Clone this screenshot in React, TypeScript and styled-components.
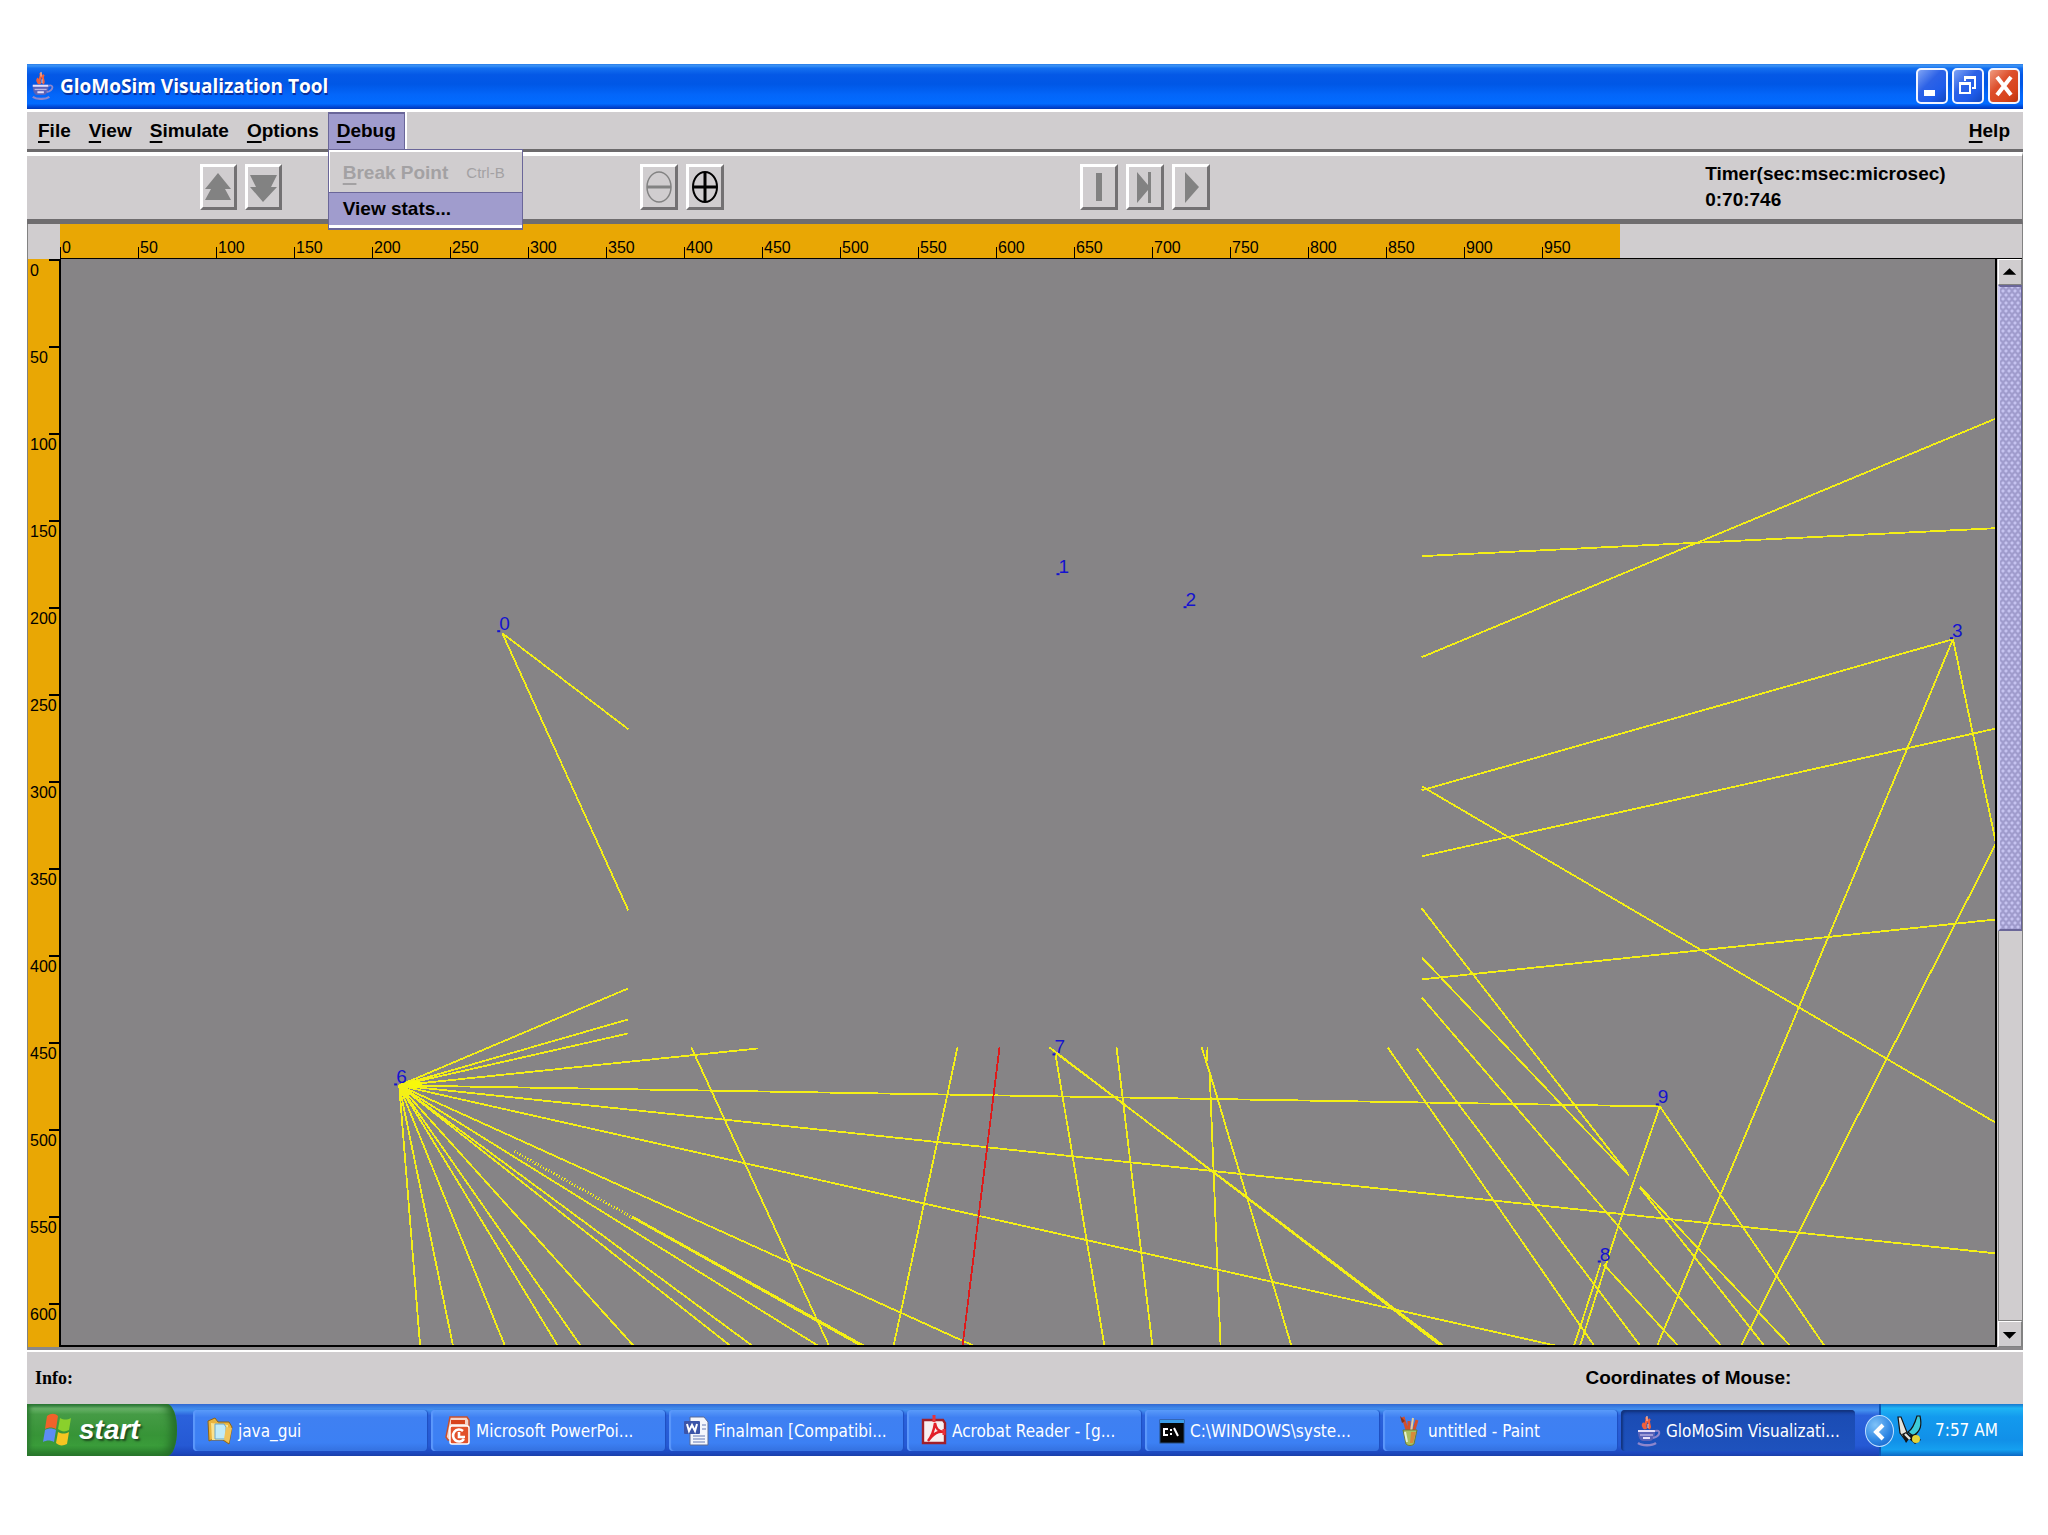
import React, { ReactNode } from "react";
import styled, { createGlobalStyle, css } from "styled-components";

const ui = `"Liberation Sans", Arial, sans-serif`;
const xp = `"DejaVu Sans Condensed", "DejaVu Sans", Tahoma, sans-serif`;

const face = "#d0cdcf";
const shade = "#828282";
const lilac = "#a09ccd";
const lilacDark = "#6a6699";
const amber = "#e9a704";
const fieldGray = "#868486";

const GlobalStyle = createGlobalStyle`
  *, *::before, *::after { box-sizing: border-box; }
  body { margin: 0; background: #fff; }
  button { font: inherit; color: inherit; margin: 0; padding: 0; border: 0; background: none; }
`;

const Desktop = styled.div`
  min-height: 100vh;
  padding: 64px 25px 79px 27px;
  display: flex;
  flex-direction: column;
  font-family: ${ui};
  color: #000;
`;

const AppWindow = styled.main`
  flex: 1;
  display: flex;
  flex-direction: column;
  background: ${face};
`;

/* ---- title bar ---- */

const TitleBar = styled.header`
  height: 45px;
  display: flex;
  align-items: center;
  gap: 6px;
  padding: 0 3px 2px;
  background: linear-gradient(#2a7de8 0, #3c94f6 4%, #1470f0 9%, #0458e6 24%, #0057e6 45%, #0366fa 68%, #026bff 88%, #0049d8 95%, #0036b4 100%);
`;

const Title = styled.h1`
  flex: 1;
  margin: 0;
  font: bold 19px/26px "Open Sans", "Noto Sans", sans-serif;
  color: #fff;
  text-shadow: 1px 2px 0 #0a2f9c;
`;

const Controls = styled.div`
  display: flex;
  gap: 4px;
`;

const Control = styled.button<{ $close?: boolean }>`
  width: 32px;
  height: 36px;
  border: 2px solid #f2f5ff;
  border-radius: 5px;
  background: ${(p) =>
    p.$close
      ? "linear-gradient(135deg, #ef9a80, #dd4f2c 40%, #d8441c 75%, #b9340f)"
      : "linear-gradient(135deg, #7fa4f5, #2d62e6 40%, #1f5cea 70%, #1247c0)"};
  svg { display: block; width: 28px; height: 32px; }
`;

/* ---- menu bar ---- */

const MenuBar = styled.nav`
  height: 43px;
  display: flex;
  padding-left: 2px;
  background: ${face};
  border-top: 3px solid #fff;
  border-bottom: 3px solid #6c6a6c;
  font: bold 19px/24px ${ui};
`;

const MenuSlot = styled.div<{ $end?: boolean }>`
  position: relative;
  ${(p) => p.$end && css`margin-left: auto; margin-right: 4px;`}
`;

const MenuButton = styled.button<{ $open?: boolean }>`
  height: 37px;
  padding: 0 9px;
  ${(p) =>
    p.$open &&
    css`
      background: ${lilac};
      box-shadow: inset 1px 2px 0 ${lilacDark}, inset -1px 0 0 ${lilacDark}, 2px 0 0 #fff;
    `}
`;

const Mnemonic = styled.span`
  text-decoration: underline;
  text-decoration-thickness: 2px;
  text-underline-offset: 4px;
`;

const Popup = styled.ul`
  position: absolute;
  z-index: 2;
  top: 37px;
  left: 0;
  width: 195px;
  margin: 0;
  padding: 2px 0 3px;
  list-style: none;
  background: ${face};
  border: 1px solid ${lilacDark};
  border-bottom-width: 2px;
  box-shadow: inset 1px 2px 0 #fff, inset 0 -3px 0 #fff;
`;

const PopupItem = styled.button<{ $active?: boolean }>`
  width: 100%;
  display: flex;
  align-items: center;
  gap: 18px;
  height: ${(p) => (p.$active ? "33px" : "40px")};
  padding: 2px 14px 0;
  color: #000;
  ${(p) => p.$active && css`padding-top: 0; background: ${lilac}; border-top: 1px solid ${lilacDark};`}
  &:disabled { color: #a3a1a3; }
`;

const Shortcut = styled.kbd`
  font: 15px/20px ${ui};
`;

/* ---- tool bar ---- */

const ToolBar = styled.section`
  height: 72px;
  display: grid;
  grid-template-columns: 440fr 440fr 626fr 317fr;
  align-items: center;
  padding: 0 0 2px 173px;
  border-top: 4px solid #fff;
  border-bottom: 5px solid #6f6d6f;
  border-right: 1px solid ${shade};
`;

const ToolGroup = styled.div`
  display: flex;
  gap: 8px;
`;

const ToolButton = styled.button<{ $wide?: boolean }>`
  width: ${(p) => (p.$wide ? "37px" : "38px")};
  height: 46px;
  background: ${face};
  border: 3px solid;
  border-color: #fff #737173 #737173 #fff;
  color: ${shade};
  svg { display: block; width: 100%; height: 100%; }
`;

const Timer = styled.output`
  font: bold 19px/26px ${ui};
  white-space: nowrap;
`;

const TimerLine = styled.span`
  display: block;
`;

/* ---- rulers and field ---- */

const View = styled.section`
  flex: 1;
  display: grid;
  grid-template: 35px minmax(0, 1fr) / 33px minmax(0, 1fr) 25px;
  border-left: 1px solid ${shade};
  border-right: 1px solid ${shade};
  border-bottom: 3px solid #8a888a;
`;

const TopRuler = styled.div`
  grid-column: 2 / 4;
  display: flex;
  margin-left: -1px;
  border-bottom: 1px solid #000;
  font: 16px/20px ${ui};
`;

const TopTick = styled.span`
  flex: 0 0 78px;
  display: flex;
  align-items: flex-end;
  background: ${amber};
  &::before { content: ""; width: 1px; height: 11px; background: #000; margin-right: 1px; }
`;

const Corner = styled.div`
  border-bottom: 1px solid ${face};
`;

const SideRuler = styled.div`
  background: ${amber};
  border-right: 2px solid #000;
  font: 16px/20px ${ui};
  height: 0;
  min-height: 100%;
  overflow: hidden;
`;

const SideTick = styled.div`
  height: 87px;
  padding: 2px 0 0 2px;
  background: linear-gradient(#000, #000) right top / 10px 2px no-repeat;
`;

const Field = styled.svg`
  display: block;
  width: 100%;
  height: 0;
  min-height: 100%;
  background: ${fieldGray};
  border-right: 2px solid #000;
  border-bottom: 2px solid #000;
`;

const ScrollBar = styled.div`
  display: flex;
  flex-direction: column;
  padding-left: 1px;
  background: ${face};
`;

const ArrowButton = styled.button`
  height: 26px;
  border: 1px solid #fff;
  border-right-color: ${shade};
  border-bottom-color: ${shade};
  svg { display: block; width: 100%; height: 100%; }
`;

const Thumb = styled.div`
  flex: 644;
  border: 2px solid ${lilacDark};
  border-left-color: #cfccf4;
  border-right-width: 1px;
  background-color: ${lilac};
  background-image: radial-gradient(circle, #c6c3f0 1px, transparent 2px), radial-gradient(circle, #c6c3f0 1px, transparent 2px);
  background-size: 6px 8px;
  background-position: 0 0, 3px 4px;
`;

const Track = styled.div`
  flex: 391;
  border-left: 1px solid ${shade};
  border-bottom: 1px solid ${shade};
`;

/* ---- status ---- */

const Status = styled.footer`
  height: 54px;
  display: grid;
  grid-template-columns: 1552fr 438fr;
  align-items: center;
  padding-left: 8px;
  border-top: 2px solid #fff;
  font: bold 19px/24px ${ui};
`;

const Info = styled.span`
  font: bold 18px/24px "Liberation Serif", "Times New Roman", serif;
`;

/* ---- task bar ---- */

const TaskBar = styled.nav`
  height: 52px;
  display: flex;
  font: 17px/24px ${xp};
  color: #fff;
  background: linear-gradient(#2f68d2 0, #3f88ea 8%, #4490ee 12%, #2b62dc 22%, #2559d4 80%, #1c47bd 95%, #1a3fa8 100%);
`;

const Start = styled.button`
  width: 150px;
  display: flex;
  align-items: center;
  gap: 6px;
  padding-left: 14px;
  border-radius: 0 10px 10px 0 / 0 26px 26px 0;
  background: linear-gradient(#2c7a44 0, #71b971 8%, #459b45 20%, #379437 60%, #3a9c3a 80%, #2a7d2e 100%);
  box-shadow: inset -6px 0 8px #256f28, inset 3px 0 4px #2f7d33;
  font: italic bold 28px/32px ${ui};
  color: #fff;
  text-shadow: 2px 2px 2px #1d4d1e;
  svg { width: 32px; height: 34px; flex: none; }
`;

const Tasks = styled.div`
  flex: 1;
  min-width: 0;
  display: flex;
  gap: 4px;
  padding: 6px 24px 5px 16px;
`;

const Task = styled.button<{ $active?: boolean }>`
  flex: 1 1 0;
  min-width: 0;
  display: flex;
  align-items: center;
  gap: 5px;
  padding-left: 14px;
  border-radius: 4px;
  white-space: nowrap;
  background: ${(p) =>
    p.$active
      ? "linear-gradient(#173f9c, #1b4cb4 15%, #1e52bd)"
      : "linear-gradient(#5a9bfa, #3f80f2 18%, #3c80f4 80%, #3471e0)"};
  box-shadow: ${(p) => (p.$active ? "inset 2px 2px 2px #12347f" : "inset 2px 0 1px #5c98fb, 1px 0 1px #1f4fc0")};
  svg { width: 26px; height: 32px; flex: none; }
`;

const Tray = styled.div`
  position: relative;
  width: 144px;
  display: flex;
  align-items: center;
  gap: 12px;
  padding-left: 16px;
  border-left: 2px solid #0c55b4;
  background: linear-gradient(#1678d0 0, #1fb4f4 8%, #139aee 25%, #1190e8 70%, #15a0f0 88%, #0c68c4 100%);
  svg { width: 26px; height: 32px; flex: none; }
`;

const Expand = styled.button`
  position: absolute;
  left: -16px;
  top: 11px;
  width: 29px;
  height: 32px;
  border-radius: 50%;
  border: 1px solid #bfe0ff;
  background: radial-gradient(circle at 35% 30%, #7fc2f8, #2a83e2 60%, #145cc0);
  svg { display: block; width: 27px; height: 30px; }
`;

/* ---- drawings ---- */

const JavaIcon = ({ size = 26 }: { size?: number }) => (
  <svg viewBox="0 0 26 32" width={size} height={(size * 32) / 26} aria-hidden="true">
    <path d="M11 2c3 4-3 6 0 12M15 4c-4 4 2 5-1 10M9 8c-3 3 1 4 0 6" stroke="#f0603c" strokeWidth="2.4" fill="none" />
    <path d="M12 1v5M13 9v4" stroke="#ffd0b8" strokeWidth="1" />
    <path d="M3 15h17v2c0 6-3 9-5 9H8c-3 0-5-4-5-9z" fill="#5a62b8" />
    <path d="M3 16h17M8 23h7" stroke="#e6e0fa" strokeWidth="2" />
    <path d="M5 20h13" stroke="#b9b4e4" strokeWidth="1.4" />
    <path d="M20 16c6-2 6 5-2 7" stroke="#8d86cc" strokeWidth="2" fill="none" />
    <path d="M3 28c4 3 14 3 18 0" stroke="#8d86cc" strokeWidth="2.4" fill="none" />
  </svg>
);

const FlagIcon = () => (
  <svg viewBox="0 0 32 34" aria-hidden="true">
    <path d="M6 3c4-3 8-3 11 0l-2 13c-4-2-7-2-11 0z" fill="#f0622a" />
    <path d="M19 5c4 2 7 2 11 0l-2 12c-4 2-7 2-11-1z" fill="#8ad02c" />
    <path d="M4 17c4-2 7-2 11 0l-2 12c-4-2-7-2-11 0z" fill="#5d8cf4" />
    <path d="M17 19c4 2 7 2 11 0l-2 12c-4 2-8 2-11-1z" fill="#f6c521" />
  </svg>
);

const FolderIcon = () => (
  <svg viewBox="0 0 26 32" aria-hidden="true">
    <path d="M1 6l7-3 3 4 11 0 3 5-3 17-6-4H4L2 26z" fill="#e9b43e" stroke="#8f6415" strokeWidth="1" />
    <path d="M4 8l17 2v15H5z" fill="#fbe28d" />
    <path d="M8 9h9l2 3v12H8z" fill="#bfeaf8" stroke="#6aa4c4" strokeWidth="1" />
    <path d="M19 12l6 1-3 15-5-4z" fill="#f0c358" />
  </svg>
);

const SlidesIcon = () => (
  <svg viewBox="0 0 26 32" aria-hidden="true">
    <path d="M5 2h17l2 3v22l-5-2H3L1 22z" fill="#f6d3c8" stroke="#c9502c" strokeWidth="1.5" />
    <path d="M6 5h14v4H6z" fill="#d8431c" />
    <rect x="5" y="11" width="19" height="18" rx="2" fill="#e2512b" stroke="#fff" strokeWidth="1.5" />
    <path d="M18 16a6 6 0 1 0 1 8M14 17v5h6" fill="none" stroke="#fff" strokeWidth="2.6" />
  </svg>
);

const DocumentIcon = () => (
  <svg viewBox="0 0 26 32" aria-hidden="true">
    <path d="M7 2h14l4 5v23H7z" fill="#f4f6fc" stroke="#5a6a94" strokeWidth="1" />
    <path d="M10 21h12M10 24h12M10 27h12M19 10h4M19 14h4" stroke="#93a3cc" strokeWidth="1.4" />
    <rect x="1" y="6" width="16" height="13" rx="1" fill="#3c55a8" />
    <path d="M4 9l2 7 3-6 3 6 2-7" fill="none" stroke="#fff" strokeWidth="2" />
  </svg>
);

const ReaderIcon = () => (
  <svg viewBox="0 0 26 32" aria-hidden="true">
    <path d="M2 5h20l2 3v20H2z" fill="#f8f0f0" stroke="#a0202a" strokeWidth="2.4" />
    <path d="M7 26c4-5 6-11 7-18 1 6 3 8 9 9-6-1-10 1-16 9z" fill="none" stroke="#e21f28" strokeWidth="2.4" />
    <path d="M13 0v7M23 14v6" stroke="#e8323a" strokeWidth="3" />
  </svg>
);

const ConsoleIcon = () => (
  <svg viewBox="0 0 26 32" aria-hidden="true">
    <rect x="1" y="5" width="24" height="23" fill="#050505" stroke="#274a78" strokeWidth="1" />
    <rect x="1" y="5" width="24" height="3" fill="#3b9de8" />
    <path d="M9 14H5v6h4M12 14v2M12 18v2M15 13l4 8" fill="none" stroke="#fff" strokeWidth="2" />
  </svg>
);

const BrushIcon = () => (
  <svg viewBox="0 0 26 32" aria-hidden="true">
    <path d="M6 2l5 16M12 6v12M20 5l-4 13" stroke="#d34f2c" strokeWidth="3" />
    <path d="M16 3l-2 14" stroke="#e5cf9e" strokeWidth="2" />
    <path d="M3 1l5 5-3 2z" fill="#8e3218" />
    <path d="M6 15h14l-3 14c-2 2-6 2-8 0z" fill="#a8bf62" stroke="#6b7a3a" strokeWidth="1" />
    <path d="M14 17h5l-3 11h-3z" fill="#d68a3a" />
    <path d="M8 17l2 10" stroke="#e8f2d0" strokeWidth="2" />
  </svg>
);

const NotifyIcon = () => (
  <svg viewBox="0 0 26 32" aria-hidden="true">
    <path d="M1 3h3l7 18-2 6-6-8z" fill="#e4e4dc" stroke="#141414" strokeWidth="1.2" />
    <path d="M20 2h3c2 9 1 15-7 20l-5-4c5-3 7-9 9-16z" fill="#3ccbd8" stroke="#141414" strokeWidth="1.2" />
    <path d="M5 20l4 9 3-4 6 5 6-4-5-6-6 1-4-3z" fill="#151515" />
    <path d="M8 20l5 5" stroke="#e4e4dc" strokeWidth="2.4" />
    <circle cx="19" cy="25" r="4" fill="#e2d43a" />
  </svg>
);

const tasks: { label: string; icon: ReactNode; active?: boolean }[] = [
  { label: "java_gui", icon: <FolderIcon /> },
  { label: "Microsoft PowerPoi...", icon: <SlidesIcon /> },
  { label: "Finalman [Compatibi...", icon: <DocumentIcon /> },
  { label: "Acrobat Reader - [g...", icon: <ReaderIcon /> },
  { label: "C:\\WINDOWS\\syste...", icon: <ConsoleIcon /> },
  { label: "untitled - Paint", icon: <BrushIcon /> },
  { label: "GloMoSim Visualizati...", icon: <JavaIcon />, active: true },
];

/* Radio links between nodes, in field coordinates: x1, y1, x2, y2. */
const links: number[][] = [
  [502, 633, 628, 729], [502, 633, 628, 910],
  [1421, 556, 1996, 528], [1421, 657, 1996, 418], [1421, 790, 1952, 639],
  [1421, 856, 1996, 728], [1421, 786, 1996, 1123], [1421, 979, 1996, 919],
  [1952, 639, 1995, 843], [1952, 639, 1656, 1346], [1995, 843, 1740, 1346],
  [1421, 908, 1627, 1173], [1421, 957, 1628, 1175], [1639, 1187, 1764, 1346],
  [1639, 1186, 1790, 1346], [1421, 997, 1721, 1346], [1416, 1048, 1640, 1346],
  [1387, 1047, 1594, 1346], [1659, 1106, 1824, 1346], [1659, 1106, 1617, 1227],
  [1617, 1227, 1579, 1346], [1600, 1263, 1573, 1346], [1603, 1264, 1678, 1346],
  [399, 1085, 628, 988], [399, 1085, 628, 1019], [399, 1085, 628, 1033],
  [399, 1085, 758, 1048], [399, 1085, 1659, 1106], [399, 1085, 1996, 1253],
  [399, 1085, 1559, 1346], [399, 1085, 975, 1346], [399, 1085, 420, 1346],
  [399, 1085, 453, 1346], [399, 1085, 505, 1346], [399, 1085, 558, 1346],
  [399, 1085, 581, 1346], [399, 1085, 634, 1346], [399, 1085, 731, 1346],
  [399, 1085, 753, 1346], [399, 1085, 819, 1346], [632, 1217, 862, 1346],
  [632, 1216, 865, 1346], [691, 1047, 829, 1346], [957, 1047, 893, 1346],
  [1049, 1047, 1441, 1346], [1056, 1053, 1444, 1346], [1055, 1054, 1104, 1346],
  [1116, 1047, 1152, 1346], [1201, 1047, 1210, 1075], [1210, 1075, 1291, 1346],
  [1207, 1047, 1206, 1061], [1209, 1071, 1220, 1346],
];

const nodes: [string, number, number][] = [
  ["0", 499, 630], ["1", 1058, 573], ["2", 1185, 606], ["3", 1951, 637],
  ["6", 396, 1083], ["7", 1054, 1053], ["8", 1599, 1260], ["9", 1657, 1103],
];

const menus = ["File", "View", "Simulate", "Options"];

const MenuLabel = ({ text }: { text: string }) => (
  <>
    <Mnemonic>{text[0]}</Mnemonic>
    {text.slice(1)}
  </>
);

export default function App() {
  return (
    <Desktop>
      <GlobalStyle />
      <AppWindow>
        <TitleBar>
          <JavaIcon size={24} />
          <Title>GloMoSim Visualization Tool</Title>
          <Controls>
            <Control aria-label="Minimize">
              <svg viewBox="0 0 28 32"><rect x="6" y="20" width="11" height="6" fill="#fff" /></svg>
            </Control>
            <Control aria-label="Restore">
              <svg viewBox="0 0 28 32" fill="none" stroke="#fff" strokeWidth="2">
                <path d="M11 11V7h10v11h-3" /><path d="M10 7.500h12" strokeWidth="3" />
                <rect x="6" y="13" width="10" height="10" /><path d="M5 13.500h12" strokeWidth="3" />
              </svg>
            </Control>
            <Control $close aria-label="Close">
              <svg viewBox="0 0 28 32"><path d="M7 7l14 18M21 7L7 25" stroke="#fff" strokeWidth="4" /></svg>
            </Control>
          </Controls>
        </TitleBar>

        <MenuBar>
          {menus.map((m) => (
            <MenuSlot key={m}>
              <MenuButton><MenuLabel text={m} /></MenuButton>
            </MenuSlot>
          ))}
          <MenuSlot>
            <MenuButton $open aria-expanded="true"><MenuLabel text="Debug" /></MenuButton>
            <Popup>
              <li>
                <PopupItem disabled>
                  <span><MenuLabel text="Break Point" /></span>
                  <Shortcut>Ctrl-B</Shortcut>
                </PopupItem>
              </li>
              <li><PopupItem $active>View stats...</PopupItem></li>
            </Popup>
          </MenuSlot>
          <MenuSlot $end>
            <MenuButton><MenuLabel text="Help" /></MenuButton>
          </MenuSlot>
        </MenuBar>

        <ToolBar>
          <ToolGroup>
            <ToolButton $wide disabled aria-label="Speed up">
              <svg viewBox="0 0 31 40"><path d="M15 6l13 16h-6l6 11H2l6-11H2z" fill="currentColor" /></svg>
            </ToolButton>
            <ToolButton $wide disabled aria-label="Slow down">
              <svg viewBox="0 0 31 40"><path d="M15 35L2 20h6L2 8h27l-6 12h6z" fill="currentColor" /></svg>
            </ToolButton>
          </ToolGroup>
          <ToolGroup>
            <ToolButton disabled aria-label="Zoom out">
              <svg viewBox="0 0 32 40" fill="none" stroke="currentColor">
                <ellipse cx="16" cy="20" rx="12" ry="15" strokeWidth="1.500" /><path d="M4 20h24" strokeWidth="3" />
              </svg>
            </ToolButton>
            <ToolButton aria-label="Zoom in">
              <svg viewBox="0 0 32 40" fill="none" stroke="#000">
                <ellipse cx="16" cy="20" rx="12" ry="15" strokeWidth="2" /><path d="M4 20h24M16 5v30" strokeWidth="3" />
              </svg>
            </ToolButton>
          </ToolGroup>
          <ToolGroup>
            <ToolButton disabled aria-label="Pause">
              <svg viewBox="0 0 32 40"><rect x="13" y="6" width="6" height="28" fill="currentColor" /></svg>
            </ToolButton>
            <ToolButton disabled aria-label="Step">
              <svg viewBox="0 0 32 40"><path d="M8 5l11 13V5h3v31h-3V23L8 36z" fill="currentColor" /></svg>
            </ToolButton>
            <ToolButton disabled aria-label="Play">
              <svg viewBox="0 0 32 40"><path d="M10 5l14 15-14 16z" fill="currentColor" /></svg>
            </ToolButton>
          </ToolGroup>
          <Timer>
            <TimerLine>Timer(sec:msec:microsec)</TimerLine>
            <TimerLine>0:70:746</TimerLine>
          </Timer>
        </ToolBar>

        <View>
          <Corner />
          <TopRuler>
            {Array.from({ length: 20 }, (_, i) => (
              <TopTick key={i}>{i * 50}</TopTick>
            ))}
          </TopRuler>
          <SideRuler>
            {Array.from({ length: 13 }, (_, i) => (
              <SideTick key={i}>{i * 50}</SideTick>
            ))}
          </SideRuler>
          <Field viewBox="61 259 1933 1086" preserveAspectRatio="xMinYMin slice" role="img" aria-label="Node field">
            <g stroke="#f4f016" strokeWidth="1.8" shapeRendering="crispEdges">
              {links.map(([x1, y1, x2, y2], i) => (
                <line key={i} x1={x1} y1={y1} x2={x2} y2={y2} />
              ))}
              <line x1="514" y1="1151" x2="632" y2="1217" strokeWidth="3" strokeDasharray="1 2" />
            </g>
            <ellipse cx="415" cy="1084" rx="7" ry="4" fill="#f8f80a" />
            <line x1="999" y1="1047" x2="962" y2="1346" stroke="#e01a1a" strokeWidth="1.8" shapeRendering="crispEdges" />
            <g fill="#1412d0" fontFamily={ui} fontSize="19">
              {nodes.map(([id, x, y]) => (
                <g key={id}>
                  <rect x={x - 2} y={y} width="3" height="2" />
                  <text x={x} y={y}>{id}</text>
                </g>
              ))}
            </g>
          </Field>
          <ScrollBar>
            <ArrowButton aria-label="Scroll up">
              <svg viewBox="0 0 23 24"><path d="M11 8l7 7H4z" /></svg>
            </ArrowButton>
            <Thumb />
            <Track />
            <ArrowButton aria-label="Scroll down">
              <svg viewBox="0 0 23 24"><path d="M11 17l7-7H4z" /></svg>
            </ArrowButton>
          </ScrollBar>
        </View>

        <Status>
          <Info>Info:</Info>
          <span>Coordinates of Mouse:</span>
        </Status>

        <TaskBar>
          <Start><FlagIcon />start</Start>
          <Tasks>
            {tasks.map((t) => (
              <Task key={t.label} $active={t.active}>{t.icon}{t.label}</Task>
            ))}
          </Tasks>
          <Tray>
            <Expand aria-label="Show hidden icons">
              <svg viewBox="0 0 27 30"><path d="M17 9l-7 7 7 7" fill="none" stroke="#fff" strokeWidth="4" /></svg>
            </Expand>
            <NotifyIcon />
            <span>7:57 AM</span>
          </Tray>
        </TaskBar>
      </AppWindow>
    </Desktop>
  );
}
